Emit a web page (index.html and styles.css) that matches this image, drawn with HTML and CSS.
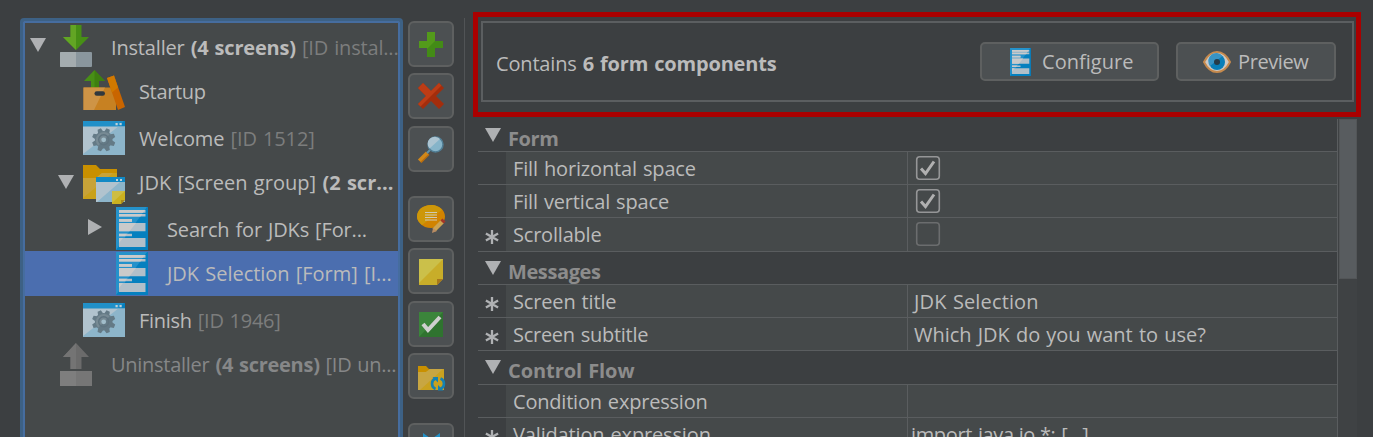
FILE: index.html
```html
<!DOCTYPE html>
<html lang="en">
<head>
<meta charset="utf-8">
<title>Installer screens</title>
<link rel="stylesheet" href="styles.css">
</head>
<body>
<svg class="defs" width="0" height="0" aria-hidden="true">
  <symbol id="formfull" viewBox="0 0 32 43">
    <path fill="#0580bf" d="M0 0h32v43H0z"/><path fill="#2592cb" d="M0 0h31L0 43z"/>
    <path fill="#b1bfc9" d="M3 3h26.500v2.700H3zM3 7h26.500v2.500H3zM3 12h13v2.700H3zM3 16h26.500v8.300H3zM3 26.700h13v2.500H3zM3 31h26.500v9H3z"/>
    <path fill="#cacaca" d="M3 3h26L27 5.700H3zM3 7h23.500l-2 2.500H3zM3 12h13v2.700H3zM3 16h17l-6.500 8.300H3zM3 26.700h8l-2 2.500H3zM3 31h4l-4 5z"/>
  </symbol>
  <symbol id="window" viewBox="0 0 42 34">
    <path fill="#8db5ca" d="M0 0h42v34H0z"/><path fill="#b1c3ce" d="M0 5h36L0 33z"/>
    <path fill="#0580bf" d="M0 0h42v5.300H0z"/><path fill="#2190c8" d="M0 0h41l-6 5.300H0z"/>
    <path fill="#c0d0d8" d="M32.500 2h2.200v2.200h-2.200zM36.500 2h2.200v2.200h-2.200z"/>
    <g transform="translate(20.700 18.800)">
      <g fill="#647a86"><circle r="8.800"/>
        <path id="tooth" d="M-2.700-8-1.800-11.700h3.600l.9 3.700z" transform="rotate(22.500)"/>
        <use href="#tooth" transform="rotate(45)"/><use href="#tooth" transform="rotate(90)"/><use href="#tooth" transform="rotate(135)"/><use href="#tooth" transform="rotate(180)"/><use href="#tooth" transform="rotate(225)"/><use href="#tooth" transform="rotate(270)"/><use href="#tooth" transform="rotate(315)"/>
      </g>
      <path fill="#778a94" d="M-5.500 6A8 8 0 0 1 6-5.500z"/>
      <circle r="5" fill="none" stroke="#5f7480" stroke-width="1.400"/><circle r="2.400" fill="#a1bdca"/>
    </g>
  </symbol>
</svg>

<main class="app">
  <section class="tree">
    <div class="row tall d0"><span class="arrow"><svg viewBox="0 0 16 14" width="16" height="14"><path d="M0 0h16L8 14z" fill="#afb1b3"/></svg></span><span class="icon"><svg width="32" height="42" viewBox="0 0 32 42"><path fill="#478f16" d="M10.500 0h11v12H29L16 25 3 12h7.500z"/><path fill="#62a524" d="M10.500 0H16v25L3 12h7.500z"/><rect y="27" width="32" height="15" rx="1" fill="#8a969d"/><path fill="#a4acaf" d="M1 27h15v15H1q-1 0-1-1V28q0-1 1-1z"/></svg></span><span class="label t1">Installer <b>(4 screens)</b> <i>[ID instal...</i></span></div>
    <div class="row d1 startup"><span class="arrow"></span><span class="icon"><svg width="42" height="41" viewBox="0 0 42 41"><path fill="#488f16" d="M11.500 0 22 11h-6v8H8v-8H1z"/><path fill="#39740e" d="M11.500 0 22 11h-6v8h-4.500z" opacity=".6"/><path fill="#c78122" d="M.5 17.500H33V40H.5z"/><path fill="#ce9446" d="M.5 17.500H22L11 40H.5z"/><rect x="11.500" y="21.300" width="10.500" height="4.500" rx="2.200" fill="#30383d"/><path fill="#c96500" d="m24 8 7-2.500L42 37l-7 3z"/><path fill="#d17900" d="m24 8 7-2.500 4 12-6 5z"/></svg></span><span class="label t2">Startup</span></div>
    <div class="row tall d1 screen"><span class="arrow"></span><span class="icon"><svg width="42" height="34"><use href="#window"/></svg></span><span class="label t3">Welcome <i>[ID 1512]</i></span></div>
    <div class="row d1 folder"><span class="arrow"><svg viewBox="0 0 16 14" width="16" height="14"><path d="M0 0h16L8 14z" fill="#afb1b3"/></svg></span><span class="icon"><svg width="42" height="39" viewBox="0 0 42 39"><path fill="#c99000" d="M0 0h13l4 4h17v30H0z"/><path fill="#c9a11b" d="M0 13h13l6-5h15v26H0z"/><path fill="#c8a338" d="M0 13h13l6-5h11L0 33z"/><path fill="#8db5ca" d="M13 12h29v25H13z"/><path fill="#b1c3ce" d="M13 17h24L14 37h-1z"/><path fill="#1189c5" d="M13 12h29v5H13z"/><path fill="#c0d0d8" d="M33 14h2v2h-2zM37 14h2v2h-2z"/><path fill="#cbb11f" d="M29 26h13v9l-4 4h-9z"/><path fill="#cdbd43" d="M29 26h13L29 38z"/><path fill="#aa881b" d="M38 35h4l-4 4z"/></svg></span><span class="label t4">JDK [Screen group] <b>(2 scr...</b></span></div>
    <div class="row tall d2"><span class="arrow side"><svg viewBox="0 0 14 16" width="14" height="16"><path d="M0 0v16l14-8z" fill="#afb1b3"/></svg></span><span class="icon"><svg width="32" height="43"><use href="#formfull"/></svg></span><span class="label t5">Search for JDKs [For...</span></div>
    <div class="row d2 selected"><span class="arrow"></span><span class="icon"><svg width="32" height="43"><use href="#formfull"/></svg></span><span class="label t6">JDK Selection [Form] [I...</span></div>
    <div class="row tall d1 screen"><span class="arrow"></span><span class="icon"><svg width="42" height="34"><use href="#window"/></svg></span><span class="label t7">Finish <i>[ID 1946]</i></span></div>
    <div class="row d0 off"><span class="arrow"></span><span class="icon"><svg width="32" height="43" viewBox="0 0 32 43"><path fill="#6b6b6b" d="M16 0 29 14h-7.500v12h-11V14H3z"/><path fill="#747474" d="M16 0v26h-5.500V14H3z"/><path fill="#767676" d="M0 28h32v15H0z"/><path fill="#7e7e7e" d="M0 28h16v15H0z"/></svg></span><span class="label t8">Uninstaller <b>(4 screens)</b> [ID un...</span></div>
  </section>

  <nav class="tools">
    <button class="tool"><svg viewBox="0 0 46 46"><path fill="#438b16" d="M19 11h8v9h8v7h-8v9h-8v-9h-8v-7h8z"/><path fill="#539a1b" d="M19 11h8v9L19 28v-1h-8v-7h8z"/></svg></button>
    <button class="tool"><svg viewBox="0 0 46 46"><path fill="#a32d0c" d="m15 10 8 8 8-8 5 5-8 8 8 8-5 5-8-8-8 8-5-5 8-8-8-8z"/><path fill="#bd3c15" d="m15 10 8 8 8-8 2.500 2.500-21 21L10 31l8-8-8-8z"/></svg></button>
    <button class="tool gap"><svg viewBox="0 0 46 46"><path stroke="#d18719" stroke-width="4.500" d="m11.500 35 8-8"/><path stroke="#b96c0e" stroke-width="1.500" d="m13 36.500 8-8"/><path stroke="#5e91aa" stroke-width="2" d="m19 27 4-4"/><circle cx="27.500" cy="18.500" r="7.500" fill="#86b4c9" stroke="#507d94" stroke-width="1.500"/><path fill="#acc4d1" d="M21.500 22.500a7 7 0 0 1 10.500-9.500z"/></svg></button>
    <button class="tool"><svg viewBox="0 0 46 46"><path fill="#d18300" d="M23 9c8 0 14 5 14 11.500S31 32 23 32q-3 0-6-1-4-2-5-4c-2-2-3-4-3-6.500C9 14 15 9 23 9z"/><path fill="#cd9709" d="M23 9c5 0 9 2 11 5L14 29c-3-2-5-5-5-8.500C9 14 15 9 23 9z"/><path stroke="#cfc9b4" stroke-width="1.200" d="M17 16.500h12M17 19h12M17 21.500h12M17 24h12"/><path stroke="#cca352" stroke-width="4.500" d="m26 34 8.500-8.500"/><path fill="#b98c63" d="m24 37 1-5 4 3z"/><path stroke="#a43628" stroke-width="4.500" d="m34 26 2-2"/></svg></button>
    <button class="tool"><svg viewBox="0 0 46 46"><path fill="#c8ad29" d="M11 11h24v20l-6 6H11z"/><path fill="#cbc04a" d="M11 11h24L11 35z"/><path fill="#a8781b" d="M29 31h6l-6 6z"/></svg></button>
    <button class="tool"><svg viewBox="0 0 46 46"><path fill="#2f732f" d="M11 11h24v25H11z"/><path fill="#3b853b" d="M11 11h24L11 36z"/><path fill="none" stroke="#cfcfcf" stroke-width="4" d="m15 23 5 6 12-13"/></svg></button>
    <button class="tool gap"><svg viewBox="0 0 46 46"><path fill="#c99000" d="M10 13h8l3 3h15v21H10z"/><path fill="#c9a11f" d="M10 19h8l4-3h14v21H10z"/><path fill="#c8a642" d="M10 19h8l4-3h13L12 37h-2z"/><path fill="none" stroke="#1582b3" stroke-width="2.600" d="M27.500 36a5.700 5.700 0 0 1 0-10.500M32.500 25.500a5.700 5.700 0 0 1 0 10.500"/><path fill="#1582b3" d="M24.500 24h5.500v5.500zM35.500 37.500H30V32z"/></svg></button>
    <button class="tool"><svg viewBox="0 0 46 46"><path fill="#238fc5" d="m15 10 7 5h3l7-5v10H15z"/></svg></button>
  </nav>

  <section class="detail">
    <header class="highlight">
      <div class="summary">
        <p class="count">Contains <b>6 form components</b></p>
        <button class="action configure"><svg width="21" height="28" viewBox="0 0 32 43"><use href="#formfull"/></svg><span>Configure</span></button>
        <button class="action preview"><svg width="28" height="22" viewBox="0 0 28 22"><path fill="#cdc9c5" stroke="#c68a4d" stroke-width="2" d="M1 11Q6 1 14 1t13 10q-5 10-13 10T1 11z"/><circle cx="14" cy="11" r="8" fill="#087eb8"/><path fill="#3994c4" d="M7 15A8 8 0 0 1 19.500 5z"/><circle cx="14" cy="11" r="3" fill="#263b48"/></svg><span>Preview</span></button>
      </div>
    </header>
    <div class="sheet">
      <div class="props">
        <div class="group"><svg class="tri" viewBox="0 0 16 14"><path d="M0 0h16L8 14z"/></svg><b class="g1">Form</b></div>
        <div class="prop"><span class="mark"></span><span class="name n1">Fill horizontal space</span><span class="value"><svg class="check" viewBox="0 0 26 26"><rect x="1.700" y="1.700" width="22.600" height="22.600" rx="3"/><path d="m6 13.500 4.500 5L19 6.500"/></svg></span></div>
        <div class="prop"><span class="mark"></span><span class="name n2">Fill vertical space</span><span class="value"><svg class="check" viewBox="0 0 26 26"><rect x="1.700" y="1.700" width="22.600" height="22.600" rx="3"/><path d="m6 13.500 4.500 5L19 6.500"/></svg></span></div>
        <div class="prop high"><span class="mark"><svg class="star" viewBox="0 0 14 14"><path d="M7 0v14M.9 3.500l12.200 7M13.100 3.500l-12.200 7"/></svg></span><span class="name n3">Scrollable</span><span class="value"><svg class="check empty" viewBox="0 0 26 26"><rect x="1.700" y="1.700" width="22.600" height="22.600" rx="3"/></svg></span></div>
        <div class="group"><svg class="tri" viewBox="0 0 16 14"><path d="M0 0h16L8 14z"/></svg><b class="g2">Messages</b></div>
        <div class="prop"><span class="mark"><svg class="star" viewBox="0 0 14 14"><path d="M7 0v14M.9 3.500l12.200 7M13.100 3.500l-12.200 7"/></svg></span><span class="name n4">Screen title</span><span class="value v4">JDK Selection</span></div>
        <div class="prop"><span class="mark"><svg class="star" viewBox="0 0 14 14"><path d="M7 0v14M.9 3.500l12.200 7M13.100 3.500l-12.200 7"/></svg></span><span class="name n5">Screen subtitle</span><span class="value v5">Which JDK do you want to use?</span></div>
        <div class="group high"><svg class="tri" viewBox="0 0 16 14"><path d="M0 0h16L8 14z"/></svg><b class="g3">Control Flow</b></div>
        <div class="prop"><span class="mark"></span><span class="name n6">Condition expression</span><span class="value"></span></div>
        <div class="prop"><span class="mark"><svg class="star" viewBox="0 0 14 14"><path d="M7 0v14M.9 3.500l12.200 7M13.100 3.500l-12.200 7"/></svg></span><span class="name n7">Validation expression</span><span class="value v7">import java.io.*; [...]</span></div>
      </div>
      <div class="scroll"><div class="thumb"></div></div>
    </div>
  </section>
</main>
</body>
</html>
```
FILE: styles.css
```css
* { box-sizing: border-box; }
html, body { margin: 0; height: 437px; overflow: hidden; }
body { background: #3c3f41; color: #bbb; font: 20px/28px "Open Sans", "Noto Sans", sans-serif; letter-spacing: -0.2px; word-spacing: 1px; }
.defs { position: absolute; }
svg { display: block; flex: none; }
b { font-weight: 700; }
i { font-style: normal; color: #7c7d7d; }
button { font: inherit; letter-spacing: inherit; color: inherit; margin: 0; padding: 0; background: #4c5052; border: 2px solid #5e6060; border-radius: 6px; }

.app { display: flex; align-items: flex-start; height: 437px; overflow: hidden; }

/* Screen tree */
.tree { flex: none; width: 383px; height: 440px; margin: 18px 5px 0 20px; border: 3px solid #3d6185; border-radius: 4px 4px 0 0; background: #45494a; box-shadow: inset 0 0 0 2px #466d9f; padding: 2px; overflow: hidden; }
.row { display: flex; align-items: center; height: 45px; white-space: nowrap; }
.row.tall { height: 46px; }
.row .arrow { flex: none; width: 16px; margin-right: 13px; padding-bottom: 2px; }
.row .side { padding: 0 0 2px 2px; }
.d0 { padding-left: 5px; }
.d1 { padding-left: 33px; }
.d2 { padding-left: 61px; }
.icon { flex: none; width: 52px; padding-left: 1px; }
.d1 .icon { width: 56px; padding-left: 0; margin-left: -4px; }
.startup .icon { padding-bottom: 3px; }
.screen .icon { padding-top: 2px; }
.folder .icon { padding-top: 4px; }
.label { padding-top: 1px; }
.tall .label { padding-top: 3px; }
.startup .label, .selected .label { padding-top: 0; }
.selected { background: #4b6eaf; }
.off { color: #868788; }
.t1 { letter-spacing: -0.17px; }
.t2 { letter-spacing: -0.35px; }
.t3 { letter-spacing: -0.1px; }
.t4 { letter-spacing: 0.03px; }
.t5 { letter-spacing: -0.15px; }
.t6 { letter-spacing: -0.02px; }
.t7, .t8 { letter-spacing: -0.27px; }

/* Toolbar */
.tools { flex: none; display: flex; flex-direction: column; gap: 6.400px; width: 46px; margin: 21px 10px 0 0; }
.tool { width: 46px; height: 46px; flex: none; }
.tool svg { width: 46px; height: 46px; margin: -2px; fill: none; }
.tool.gap { margin-bottom: 17.800px; }

/* Detail pane */
.detail { flex: none; width: 909px; height: 419px; margin-top: 18px; border-left: 1px solid #515456; padding-left: 8px; }
.highlight { width: 888px; height: 105px; margin-top: -6px; border: 5px solid #a00; padding: 4px 2px 0 3px; }
.summary { display: flex; align-items: center; height: 81px; border: 2px solid #5b5e60; padding: 0 16px 0 13px; }
.count { margin: 4px auto 0 0; letter-spacing: -0.17px; }
.action { display: flex; align-items: center; height: 39px; border-radius: 5px; }
.configure { width: 179px; padding-left: 28px; gap: 11px; margin-right: 17px; letter-spacing: 0.04px; }
.preview { width: 160px; padding-left: 25px; gap: 7px; letter-spacing: -0.4px; }

/* Property sheet */
.sheet { display: flex; height: 330px; margin: 2px 0 0 5px; }
.props { width: 860px; border-right: 1px solid #5a5d5f; }
.group, .prop { display: flex; height: 33px; border-bottom: 1px solid #5a5d5f; }
.group.high, .prop.high { height: 34px; }
.group { padding-left: 7px; color: #8c8c8c; }
.group b { padding: 6px 0 0 7px; letter-spacing: -0.4px; }
.group .g3 { letter-spacing: -0.07px; }
.tri { width: 16px; height: 14px; margin-top: 9px; fill: #afb1b3; }
.prop { background: #45494a; line-height: 33px; }
.mark { width: 28px; background: #3c3f41; padding: 12px 0 0 7px; }
.star { width: 14px; height: 14px; stroke: #afb1b3; stroke-width: 2.300; }
.name { width: 401px; padding-left: 7px; }
.n1, .n2, .n4, .n7 { letter-spacing: -0.15px; }
.n5 { letter-spacing: -0.27px; }
.value { flex: 1; border-left: 1px solid #5a5d5f; padding-left: 6px; }
.v4 { letter-spacing: 0.14px; }
.v5 { letter-spacing: -0.02px; }
.v7 { padding-left: 3px; letter-spacing: -0.35px; }
.check { width: 26px; height: 26px; margin: 3px 0 0 1px; fill: none; stroke: #959697; stroke-width: 1.600; }
.check path { stroke: #b0b0b0; stroke-width: 3; }
.check.empty { stroke: #6b6d6e; }
.scroll { width: 19px; padding-left: 1px; background: #3f4244; }
.thumb { height: 160px; background: #585c5f; border: 1px solid #525557; }
```
